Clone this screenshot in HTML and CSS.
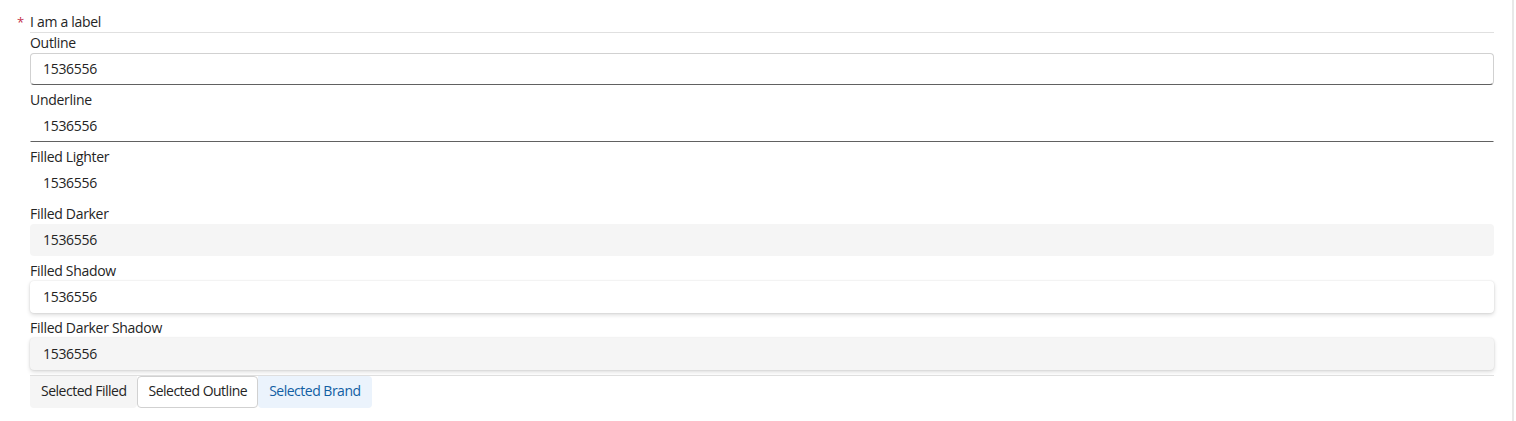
FILE: index.html
```html
<!DOCTYPE html>
<html>
<head>
<meta charset="utf-8">
<link rel="stylesheet" href="styles.css">
</head>
<body>
<div class="page">
  <div class="content">
    <div class="header">
      <span class="req">*</span>
      <span class="title">I am a label</span>
    </div>
    <div class="fields">
      <div class="field">
        <label class="lbl">Outline</label>
        <div class="input outline">1536556</div>
      </div>
      <div class="field">
        <label class="lbl">Underline</label>
        <div class="input underline">1536556</div>
      </div>
      <div class="field">
        <label class="lbl">Filled Lighter</label>
        <div class="input lighter">1536556</div>
      </div>
      <div class="field">
        <label class="lbl">Filled Darker</label>
        <div class="input darker">1536556</div>
      </div>
      <div class="field">
        <label class="lbl">Filled Shadow</label>
        <div class="input shadow">1536556</div>
      </div>
      <div class="field">
        <label class="lbl">Filled Darker Shadow</label>
        <div class="input darker shadow">1536556</div>
      </div>
    </div>
    <div class="buttons">
      <button class="btn filled">Selected Filled</button>
      <button class="btn outlined">Selected Outline</button>
      <button class="btn brand">Selected Brand</button>
    </div>
  </div>
</div>
</body>
</html>
```

FILE: styles.css
```css
html, body {
  margin: 0;
  padding: 0;
  background: #ffffff;
}
body {
  font-family: "Open Sans", "Noto Sans", sans-serif;
  font-size: 14px;
  letter-spacing: -0.3px;
  color: #242424;
}
.page {
  width: 1512px;
  height: 421px;
  border-right: 2px solid #e8e8e8;
}
.content {
  margin: 0 18px 0 30px;
  padding-top: 12px;
}
.header {
  display: flex;
  align-items: center;
  margin-left: -13px;
  height: 20px;
  line-height: 20px;
}
.req {
  width: 13px;
  color: #c4314b;
  font-size: 13px;
}
.title {
  flex: 1;
}
.fields {
  border-top: 1px solid #e0e0e0;
  display: flex;
  flex-direction: column;
  gap: 5px;
  padding-bottom: 5px;
  border-bottom: 1px solid #e0e0e0;
}
.field {
  display: flex;
  flex-direction: column;
}
.lbl {
  line-height: 20px;
  height: 20px;
}
.input {
  box-sizing: border-box;
  height: 32px;
  line-height: 30px;
  padding: 0 12px;
  border: 1px solid transparent;
  border-radius: 4px;
  background: #ffffff;
}
.input.outline {
  border-color: #d1d1d1;
  border-bottom-color: #616161;
}
.input.underline {
  border-radius: 0;
  border-bottom-color: #616161;
}
.input.darker {
  background: #f5f5f5;
}
.input.shadow {
  box-shadow: 0 0 2px rgba(0, 0, 0, 0.12), 0 2px 4px rgba(0, 0, 0, 0.14);
  border-color: transparent;
}
.buttons {
  display: flex;
  height: 32px;
}
.btn {
  box-sizing: border-box;
  height: 32px;
  font-family: inherit;
  font-size: 14px;
  letter-spacing: -0.5px;
  line-height: 28px;
  padding: 0 10px 2px;
  border: 1px solid transparent;
  border-radius: 4px;
  background: transparent;
  color: #242424;
  margin: 0;
}
.btn.filled {
  background: #f5f5f5;
  border-top-left-radius: 0;
  border-top-right-radius: 0;
}
.btn.outlined {
  background: #ffffff;
  border-color: #d1d1d1;
}
.btn.brand {
  background: #ebf3fc;
  color: #115ea3;
  border-top-left-radius: 0;
}
```
